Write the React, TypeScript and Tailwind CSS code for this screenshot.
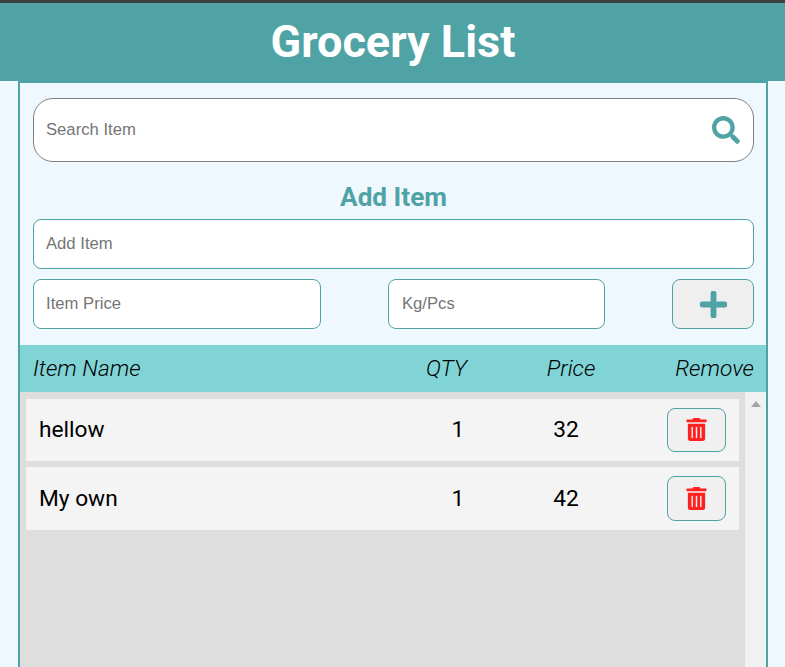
import { FaPlus, FaSearch, FaTrashAlt } from "react-icons/fa";

const items = [
	{ name: "hellow", qty: 1, price: 32 },
	{ name: "My own", qty: 1, price: 42 },
];

const fieldClass =
	"h-[50px] rounded-lg border border-[#4fa3a5] bg-white pr-[13px] font-['Liberation_Sans',sans-serif] text-[16.67px] text-black outline-none placeholder:text-[#757575]";

export default function App() {
	return (
		<div className="flex h-screen flex-col overflow-hidden bg-[#f0f8ff] font-['Roboto',sans-serif]">
			<div className="h-[3px] shrink-0 bg-[#3c4043]" />
			<header className="flex h-[78px] shrink-0 items-center justify-center bg-[#4fa3a5] pb-[2px] pl-px">
				<h1 className="text-[45px] font-bold leading-none text-white">Grocery List</h1>
			</header>

			<main className="ml-[18px] mr-[17px] flex min-h-0 flex-1 flex-col border-2 border-b-0 border-[#4fa3a5]">
				<section className="pl-[13px] pr-[12px] pt-[15px]">
					<div className="relative">
						<input
							placeholder="Search Item"
							className="h-16 w-full rounded-[20px] border border-[#808080] bg-white pl-3 pr-12 font-['Liberation_Sans',sans-serif] text-[16.67px] outline-none placeholder:text-[#757575]"
						/>
						<FaSearch className="absolute right-[14px] top-[18px] text-[28px] text-[#4fa3a5]" />
					</div>

					<h2 className="mt-[21px] text-center text-[26.2px] font-bold leading-[29px] text-[#4fa3a5]">Add Item</h2>

					<input placeholder="Add Item" className={`${fieldClass} mt-[7px] block w-full pl-3`} />

					<div className="mt-[10px] flex items-center justify-between">
						<input placeholder="Item Price" className={`${fieldClass} w-[288px] pl-3`} />
						<input placeholder="Kg/Pcs" className={`${fieldClass} w-[217px] pl-[13px]`} />
						<button
							type="button"
							className="flex h-[50px] w-[82px] items-center justify-center rounded-lg border border-[#4fa3a5] bg-[#efefef] text-[31px] text-[#4fa3a5]"
						>
							<FaPlus />
						</button>
					</div>
				</section>

				<div className="mt-4 grid h-[47px] shrink-0 grid-cols-[350px_127px_122px_1fr] items-center bg-[#81d4d6] pl-[13px] pr-[12px] pt-[2px] text-[22.7px] font-light italic text-black">
					<span>Item Name</span>
					<span className="text-center">QTY</span>
					<span className="text-center">Price</span>
					<span className="text-right">Remove</span>
				</div>

				<div className="flex min-h-0 flex-1">
					<div className="flex-1 bg-[#dedede] pl-[6px] pr-[6px] pt-[6.6px]">
						{items.map((item) => (
							<div
								key={item.name}
								className="mb-[5.6px] grid h-[62.8px] grid-cols-[362px_114px_102px_1fr] items-center bg-[#f4f4f4] pl-[13px] pr-[13px] text-[22.7px] text-black"
							>
								<span className="pt-px">{item.name}</span>
								<span className="pt-px text-center">{item.qty}</span>
								<span className="pt-px text-center">{item.price}</span>
								<div className="flex justify-end">
									<button
										type="button"
										className="flex h-[44.5px] w-[59px] items-center justify-center rounded-lg border border-[#4fa3a5] bg-[#f0f0f0] text-[23px] text-[#ff2020]"
									>
										<FaTrashAlt />
									</button>
								</div>
							</div>
						))}
					</div>
					<div className="flex w-[21px] shrink-0 justify-center bg-[#f1f1f1] pt-[9px]">
						<div className="h-0 w-0 border-x-[5px] border-b-[6px] border-x-transparent border-b-[#a3a3a3]" />
					</div>
				</div>
			</main>
		</div>
	);
}
